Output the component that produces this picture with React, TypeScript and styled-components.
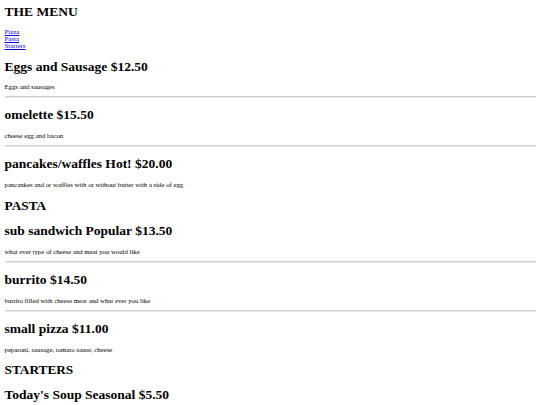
import React from "react";
import styled, { createGlobalStyle } from "styled-components";

const Global = createGlobalStyle`
  html, body { margin: 0; padding: 0; background: #fff; }
  body {
    font-family: "Liberation Serif", "Times New Roman", serif;
    color: #000;
  }
`;

const Page = styled.main`
  padding: 4.25px 4.5px 0 4.5px;
`;

const Title = styled.h1`
  margin: 0 0 8px;
  font-size: 13.5px;
  line-height: 15.5px;
  font-weight: bold;
`;

const Nav = styled.nav`
  display: flex;
  flex-direction: column;
  align-items: flex-start;
  margin-bottom: 9.75px;
`;

const NavLink = styled.a`
  font-size: 6.9px;
  line-height: 7px;
  color: #0000ee;
  text-decoration: underline;
`;

const SectionTitle = styled.h2`
  margin: 10px 0 9px;
  font-size: 13.3px;
  line-height: 14.5px;
  font-weight: bold;
`;

const Item = styled.section``;

const ItemTitle = styled.h3`
  margin: 9.25px 0 9.35px;
  font-size: 13.5px;
  line-height: 15.5px;
  font-weight: bold;
`;

const Desc = styled.p`
  margin: 5px 0 5.1px;
  font-size: 6.75px;
  line-height: 7.8px;
`;

const Rule = styled.hr`
  margin: 4.5px 0;
  height: 0;
  border: none;
  border-top: 1px solid #cfcfcf;
  border-bottom: 1px solid #e9e9e9;
`;

type MenuItem = { name: string; price: string; desc: string };
type Section = { title?: string; items: MenuItem[] };

const sections: Section[] = [
  {
    items: [
      { name: "Eggs and Sausage", price: "$12.50", desc: "Eggs and sausages" },
      { name: "omelette", price: "$15.50", desc: "cheese egg and bacon" },
      {
        name: "pancakes/waffles Hot!",
        price: "$20.00",
        desc: "pancankes and or waffles with or without butter with a side of egg",
      },
    ],
  },
  {
    title: "PASTA",
    items: [
      {
        name: "sub sandwich Popular",
        price: "$13.50",
        desc: "what ever type of cheese and meat you would like",
      },
      {
        name: "burrito",
        price: "$14.50",
        desc: "burrito filled with cheese meat and what ever you like",
      },
      {
        name: "small pizza",
        price: "$11.00",
        desc: "peparoni, sausage, tomato sause, cheese",
      },
    ],
  },
  {
    title: "STARTERS",
    items: [
      {
        name: "Today's Soup Seasonal",
        price: "$5.50",
        desc: "ask your server about today's soup",
      },
    ],
  },
];

export default function App() {
  return (
    <>
      <Global />
      <Page>
        <Title>THE MENU</Title>
        <Nav>
          <NavLink href="#pizza">Pizza</NavLink>
          <NavLink href="#pasta">Pasta</NavLink>
          <NavLink href="#starters">Starters</NavLink>
        </Nav>
        {sections.map((s, si) => (
          <div key={si}>
            {s.title && <SectionTitle>{s.title}</SectionTitle>}
            {s.items.map((it, i) => (
              <Item key={it.name}>
                <ItemTitle>
                  {it.name} {it.price}
                </ItemTitle>
                <Desc>{it.desc}</Desc>
                {i < s.items.length - 1 && <Rule />}
              </Item>
            ))}
          </div>
        ))}
      </Page>
    </>
  );
}
